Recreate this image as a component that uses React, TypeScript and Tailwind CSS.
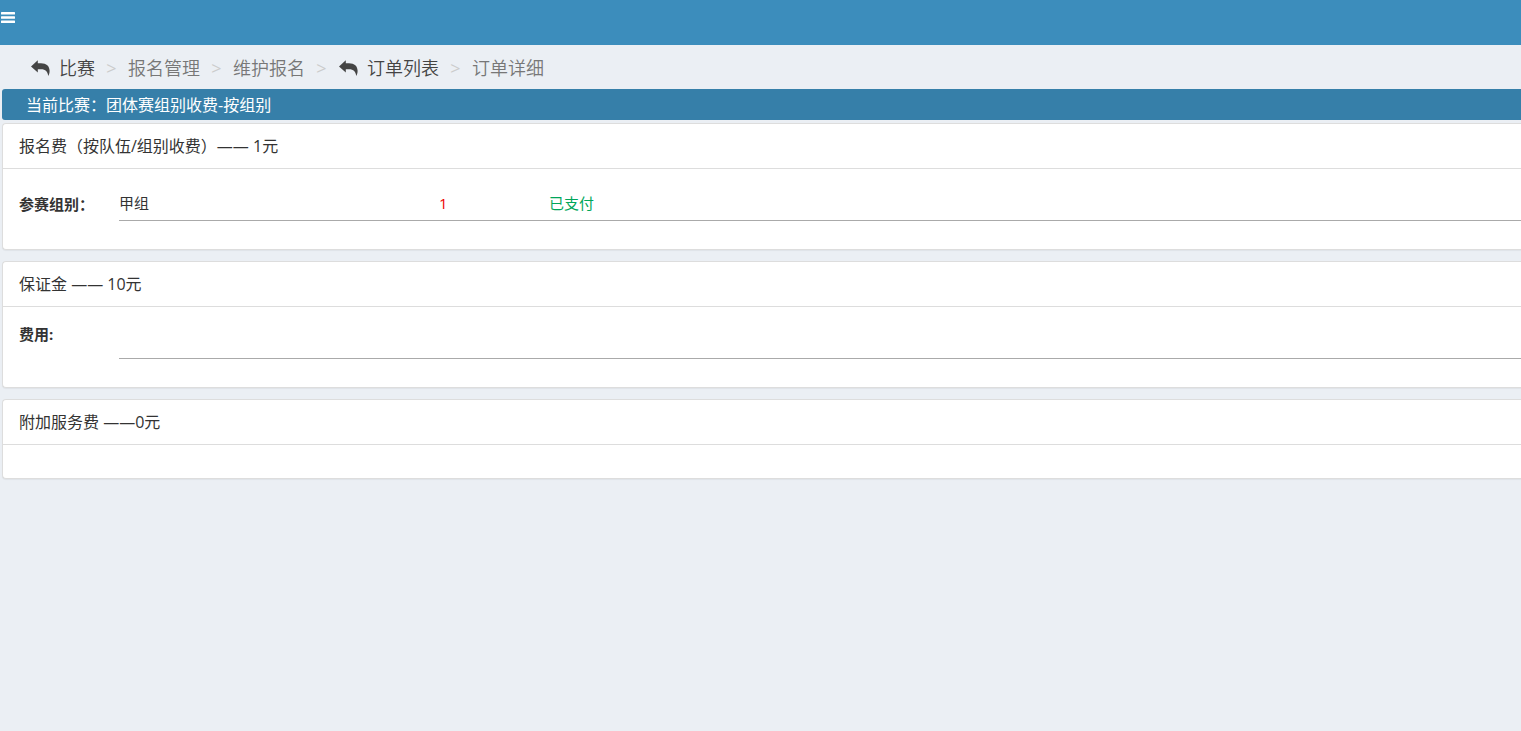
import type { ReactNode } from "react";

function ReplyArrow() {
  return (
    <svg viewBox="0 0 20 16" className="h-4 w-5 shrink-0" fill="currentColor" aria-hidden="true">
      <path d="M1 6.4 L7.8 0.2 V3.2 H11 C16.4 3.2 19.6 6 19.6 10.8 C19.6 12.8 19.2 14.6 18.2 16 C17.8 11.6 15.6 9.2 11 9.2 H7.8 V12.4 Z" />
    </svg>
  );
}

function Separator() {
  return (
    <span aria-hidden="true" className="w-[33px] text-center font-normal text-[#cccccc]">
      &gt;
    </span>
  );
}

function Card({ title, children }: { title: string; children?: ReactNode }) {
  return (
    <section className="rounded-l border border-r-0 border-[#dddddd] bg-white shadow-[0_1px_1px_rgba(0,0,0,0.05)]">
      <h2 className="flex h-[45px] items-center border-b border-[#dddddd] px-4 text-base">{title}</h2>
      {children}
    </section>
  );
}

export default function App() {
  return (
    <div className="min-h-screen bg-[#ebeff4] font-['Open_Sans','Noto_Sans_CJK_SC',sans-serif] text-[15px] leading-5 text-[#333333]">
      <header className="h-[45px] bg-[#3c8dbc]">
        <button type="button" aria-label="菜单" className="block px-px pt-3 text-white">
          <svg viewBox="0 0 14 11" className="h-[11px] w-3.5" fill="currentColor" aria-hidden="true">
            <rect width="14" height="2.6" rx="0.5" />
            <rect y="4.2" width="14" height="2.6" rx="0.5" />
            <rect y="8.4" width="14" height="2.6" rx="0.5" />
          </svg>
        </button>
      </header>

      <nav aria-label="导航" className="flex h-11 items-center pt-0.5 pl-[30px] text-lg font-[350] text-[#777777]">
        <a href="#match" className="flex items-center gap-[9px] text-[#444444]">
          <ReplyArrow />
          比赛
        </a>
        <Separator />
        <a href="#registration">报名管理</a>
        <Separator />
        <a href="#maintain">维护报名</a>
        <Separator />
        <a href="#orders" className="flex items-center gap-[9px] text-[#444444]">
          <ReplyArrow />
          订单列表
        </a>
        <Separator />
        <span>订单详细</span>
      </nav>

      <main className="pl-0.5">
        <p className="mb-[3px] flex h-[31px] items-center rounded-l-[3px] bg-[#367fa9] px-6 text-base text-white">
          当前比赛：团体赛组别收费-按组别
        </p>
        <div className="flex flex-col gap-[11px]">
          <Card title="报名费（按队伍/组别收费）—— 1元">
            <div className="flex pt-[17px] pb-7 pl-4">
              <h3 className="w-[100px] pt-2 font-bold">参赛组别：</h3>
              <div className="flex h-[35px] flex-1 border-b border-[#aaaaaa] pt-[7px]">
                <span className="w-80">甲组</span>
                <span className="w-[110px] text-[#ee0000]">1</span>
                <span className="text-[#00a65a]">已支付</span>
              </div>
            </div>
          </Card>
          <Card title="保证金 —— 10元">
            <div className="flex pt-[17px] pb-7 pl-4">
              <h3 className="w-[100px] font-bold">费用:</h3>
              <div className="h-[35px] flex-1 border-b border-[#aaaaaa]" />
            </div>
          </Card>
          <Card title="附加服务费 ——0元">
            <div className="h-[33px]" />
          </Card>
        </div>
      </main>
    </div>
  );
}
